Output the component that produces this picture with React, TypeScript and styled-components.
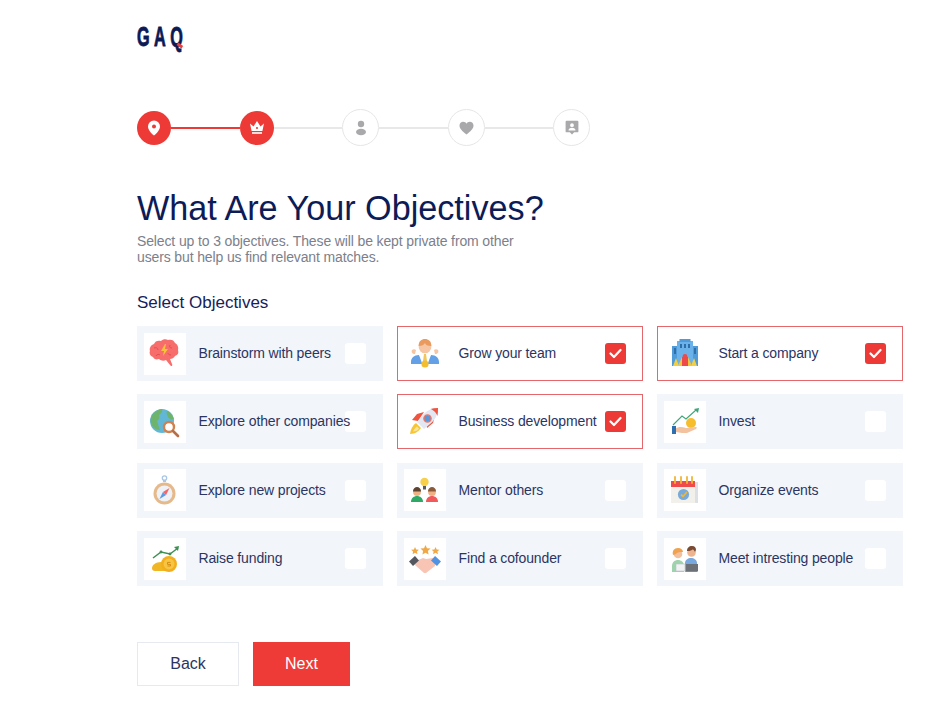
import React from "react";
import styled, { createGlobalStyle } from "styled-components";

const Global = createGlobalStyle`
  html, body { margin: 0; padding: 0; background: #fff; }
  body { font-family: "Liberation Sans", Arial, sans-serif; }
`;

const Page = styled.main`
  width: 935px;
  height: 720px;
  box-sizing: border-box;
  padding: 27px 32px 0 137px;
  overflow: hidden;
`;

const LogoMark = styled.div`
  position: relative;
  width: 48px;
  height: 23px;
`;

const LogoText = styled.span`
  display: block;
  font-size: 27px;
  line-height: 21px;
  font-weight: 700;
  letter-spacing: 7.5px;
  color: #0b1a55;
  white-space: nowrap;
  -webkit-text-stroke: 0.9px #0b1a55;
  transform: scaleX(0.6);
  transform-origin: 0 50%;
`;

const LogoDot = styled.i`
  position: absolute;
  left: 40px;
  top: 17px;
  width: 6px;
  height: 2.5px;
  background: #e8413c;
  transform: rotate(35deg);
`;

const Stepper = styled.div`
  display: flex;
  align-items: center;
  width: 453px;
  height: 37px;
  margin-top: 59px;
`;

const StepCircle = styled.div<{ $active?: boolean }>`
  flex: none;
  display: flex;
  align-items: center;
  justify-content: center;
  box-sizing: border-box;
  width: ${(p) => (p.$active ? 34 : 37)}px;
  height: ${(p) => (p.$active ? 34 : 37)}px;
  border-radius: 50%;
  background: ${(p) => (p.$active ? "#ee3a36" : "#fff")};
  border: ${(p) => (p.$active ? "none" : "1.5px solid #e6e6e6")};
`;

const StepLine = styled.div<{ $active?: boolean }>`
  flex: 1;
  height: 2px;
  background: ${(p) => (p.$active ? "#ee3a36" : "#e8e8e8")};
`;

const Title = styled.h1`
  margin: 41px 0 0;
  font-size: 34.2px;
  line-height: 42px;
  font-weight: 400;
  color: #0d1b57;
  white-space: nowrap;
`;

const Subtitle = styled.p`
  margin: 4px 0 0;
  width: 400px;
  font-size: 14px;
  letter-spacing: -0.13px;
  line-height: 16px;
  color: #7c808b;
`;

const SectionLabel = styled.h2`
  margin: 28px 0 0;
  font-size: 17px;
  line-height: 20px;
  font-weight: 400;
  color: #16225c;
`;

const Grid = styled.div`
  display: grid;
  grid-template-columns: repeat(3, 246px);
  grid-auto-rows: 55px;
  column-gap: 14px;
  row-gap: 13.4px;
  margin-top: 13px;
`;

const Card = styled.div<{ $selected?: boolean }>`
  display: flex;
  align-items: center;
  box-sizing: border-box;
  padding: 0 16px 0 6px;
  background: ${(p) => (p.$selected ? "#fff" : "#f2f5f9")};
  border: 1px solid ${(p) => (p.$selected ? "#e4686b" : "#f2f5f9")};
`;

const IconTile = styled.div`
  flex: none;
  width: 42px;
  height: 42px;
  background: #fff;
  svg { display: block; }
`;

const CardLabel = styled.span`
  position: relative;
  z-index: 1;
  flex: 1;
  min-width: 0;
  margin: 0 0 1px 12.5px;
  font-size: 14px;
  letter-spacing: -0.14px;
  line-height: 18px;
  color: #2b3563;
  white-space: nowrap;
`;

const Check = styled.div<{ $checked?: boolean }>`
  flex: none;
  display: flex;
  align-items: center;
  justify-content: center;
  width: 21px;
  height: 21px;
  border-radius: 3px;
  background: ${(p) => (p.$checked ? "#ee3a36" : "#fff")};
`;

const Actions = styled.div`
  display: flex;
  gap: 14px;
  margin-top: 55.8px;
`;

const BackButton = styled.button`
  box-sizing: border-box;
  width: 102px;
  height: 44px;
  padding: 0;
  background: #fff;
  border: 1px solid #e6e9ef;
  font-family: inherit;
  font-size: 16px;
  color: #2b3563;
`;

const NextButton = styled.button`
  width: 97px;
  height: 44px;
  padding: 0;
  background: #ef3b37;
  border: none;
  font-family: inherit;
  font-size: 16px;
  color: #fff;
`;

const Svg: React.FC<{ children: React.ReactNode }> = ({ children }) => (
  <svg width="42" height="42" viewBox="0 0 42 42" aria-hidden="true">
    {children}
  </svg>
);

const Brain = () => (
  <Svg>
    <path
      d="M10 11c1-3 4-4 7-3 2-2 5-2 7-1 3-1 6 0 7 3 2 1 4 4 3 7 1 3 0 5-3 6-1 2-3 3-5 3l2 5c1 2-1 3-2 1l-4-5c-2 1-5 1-7-1-3 1-5 0-6-2-3-1-4-4-3-6-1-3 1-6 4-7z"
      fill="#f76d6b"
    />
    <path d="M10 15c2-1 4 0 4 2M26 12c-1 2 0 3 2 3M12 23c1-2 3-2 4-1M27 22c-2 0-3-1-3-2" fill="none" stroke="#e0504f" strokeWidth="1" />
    <path d="M21 11l-4 7h3l-1 5 5-7h-3l1-5z" fill="#f8c13c" />
  </Svg>
);

const Globe = () => (
  <Svg>
    <circle cx="18" cy="20" r="12" fill="#63b7d6" />
    <path d="M8 14c3-4 7-6 10-6 1 3-1 5-3 6 1 3 0 5-2 6 1 3 2 6 3 9-5 0-8-3-9-7-1-3 0-6 1-8zM23 10c3 1 6 4 7 8-3 1-5 0-6-2-1-2-2-4-1-6zM22 25c2-1 4 0 4 1-1 2-3 3-5 4 0-2 0-4 1-5z" fill="#6fb46d" />
    <circle cx="25" cy="26" r="5" fill="#fff" stroke="#cf8250" strokeWidth="2.4" />
    <path d="M29 30l5 5" stroke="#b96f45" strokeWidth="2.6" strokeLinecap="round" />
  </Svg>
);

const Compass = () => (
  <Svg>
    <path d="M20.500 13v-2" stroke="#a9c6e6" strokeWidth="3" />
    <circle cx="20.500" cy="9" r="2.200" fill="none" stroke="#a9c6e6" strokeWidth="1.300" />
    <circle cx="20.500" cy="24.500" r="11" fill="#e5b98a" />
    <circle cx="20.500" cy="24.500" r="8" fill="#eef1f6" />
    <path d="M25.500 19l-3.400 7-3.200-3z" fill="#f0686a" />
    <path d="M15.500 30l3.400-7 3.200 3z" fill="#5d9be4" />
  </Svg>
);

const Funding = () => (
  <Svg>
    <path d="M9 20l8-6 9 2 8-6" fill="none" stroke="#3e8f52" strokeWidth="1.5" />
    <path d="M30 9l5-1-1 5z" fill="#3e8f52" />
    <circle cx="17" cy="14" r="1.4" fill="#3e8f52" />
    <circle cx="26" cy="16" r="1.4" fill="#3e8f52" />
    <path d="M8 30c0-3 4-6 9-6h6v9H11c-2 0-3-1-3-3z" fill="#f0b624" />
    <circle cx="25" cy="26" r="8" fill="#f3ae1d" />
    <circle cx="25" cy="26" r="5.400" fill="#f7c544" />
    <path d="M23.500 28h3v-1.600h-3v-2h3" fill="none" stroke="#d58d12" strokeWidth="1" />
  </Svg>
);

const Team = () => (
  <Svg>
    <path d="M7 29c0-4 3-7 8-7l6 4 6-4c5 0 8 3 8 7v2H7z" fill="#64a0e6" />
    <path d="M11 21c-3 0-4-2-3-4 1-1 3-1 4 0zM31 21c3 0 4-2 3-4-1-1-3-1-4 0z" fill="#f6c6a4" />
    <circle cx="21" cy="14" r="6.3" fill="#f6c6a4" />
    <path d="M14.6 13c0-5 3-7 6.4-7s6.4 2 6.4 7c-4 0-6-1-6.4-3-1 2-3 3-6.4 3z" fill="#ea9a5e" />
    <path d="M15 22h12l-3 8h-6z" fill="#fff" />
    <path d="M20 21h2l1 7h-4z" fill="#f0c75a" />
    <circle cx="21" cy="31" r="3.6" fill="#f2be2f" />
  </Svg>
);

const Rocket = () => (
  <Svg>
    <path d="M6 33c.5-5 3-9 6-11l5 5c-2 3-6 6-11 6z" fill="#f7c531" />
    <path d="M9 30.500c1-2 2-4 4-5l2 2c-1 2-3 3-6 3z" fill="#fbe39a" />
    <path d="M13 13l7-2-6 9-6-1zM29 22l2-7-9 6 1 6 z" fill="#f0543f" />
    <path d="M34 7c-7 0-12 3-16 8l-5 6 7 7 6-5c5-4 8-9 8-16z" fill="#e3e7f1" />
    <path d="M26.500 8c2.500 .5 6 4 7 7 .4-2.500.5-5.300.5-8-2.800 0-5.300.3-7.500 1z" fill="#f0543f" />
    <circle cx="23.500" cy="17.500" r="3.600" fill="#5c97d8" stroke="#e8776a" strokeWidth="1.400" />
  </Svg>
);

const Mentor = () => (
  <Svg>
    <circle cx="20.500" cy="13" r="4.200" fill="#f7cf4a" />
    <rect x="19" y="17" width="3" height="3.500" fill="#5b5b5b" />
    <path d="M7 33c0-4 3-6 6-6s6 2 6 6z" fill="#2fa866" />
    <circle cx="13" cy="23" r="3.900" fill="#eeb284" />
    <path d="M9 22.500c0-3 2-4.500 4-4.500s4 1.500 4 4.500c-3 0-6 0-8 0z" fill="#5e4331" />
    <path d="M22 33c0-4 3-6 6-6s6 2 6 6z" fill="#f05a5a" />
    <circle cx="28" cy="23" r="3.900" fill="#eeb284" />
    <path d="M24 22.500c0-3 2-4.500 4-4.500s4 1.500 4 4.500c-3 0-6 0-8 0z" fill="#8a5a3a" />
  </Svg>
);

const Handshake = () => (
  <Svg>
    <path d="M11 9l1.200 2.500 2.700.3-2 1.800.6 2.600-2.500-1.400-2.400 1.400.5-2.600-2-1.800 2.800-.3zM21.500 7l1.500 3.200 3.500.4-2.600 2.400.7 3.400-3.100-1.700-3.100 1.700.7-3.400-2.600-2.400 3.500-.4zM31.500 9l1.200 2.500 2.700.3-2 1.800.6 2.600-2.500-1.400-2.400 1.400.5-2.600-2-1.800 2.800-.3z" fill="#f0a846" />
    <path d="M12 23l7-3 3 1 7-1 3 4-1 4-9 7h-2l-9-8z" fill="#f8c5b4" />
    <rect x="6" y="20" width="8" height="6" transform="rotate(-42 10 23)" fill="#55575f" />
    <rect x="28" y="20" width="8" height="6" transform="rotate(42 32 23)" fill="#4f93e2" />
  </Svg>
);

const Company = () => (
  <Svg>
    <rect x="8" y="13" width="26" height="20" fill="#4f9ad8" />
    <rect x="13" y="8" width="16" height="25" fill="#6bb1ea" />
    <rect x="15.500" y="6" width="11" height="3" fill="#4f9ad8" />
    <path d="M10 15h2v6h-2zM30 15h2v6h-2zM16 11h2v4h-2zM20 11h2v4h-2zM24 11h2v4h-2z" fill="#2f6fa8" />
    <path d="M9 33l3-8 3 8zM27 33l3-8 3 8z" fill="#f4cf3f" />
    <path d="M14 33l4-9 2 9zM22 33l2-9 4 9z" fill="#f6c63a" />
    <rect x="18" y="24" width="6" height="9" fill="#ee4a48" />
    <circle cx="21" cy="23.500" r="2.400" fill="#ee4a48" />
  </Svg>
);

const Invest = () => (
  <Svg>
    <path d="M9 24l9-9 4 3 10-9" fill="none" stroke="#3fa67a" strokeWidth="1.100" />
    <path d="M30 8l5-1-1 5z" fill="#3fa67a" />
    <circle cx="27" cy="22" r="5" fill="#f6bd2c" />
    <path d="M11 28c4-3 7-2 11-1l10-1c1 0 1 1 0 2l-9 4h-5l-6-1z" fill="#f3c3a0" />
    <rect x="8" y="25" width="4" height="8" fill="#2f6fb0" />
  </Svg>
);

const Events = () => (
  <Svg>
    <path d="M11 13h23v21l-19-1z" fill="#dcdfe4" />
    <rect x="7" y="13" width="24" height="21" fill="#f2f0ea" />
    <rect x="7" y="12" width="24" height="6" fill="#ef4b4b" />
    <path d="M11 8v6M17 8v6M23 8v6M28 8v6" stroke="#f0b534" strokeWidth="1.800" strokeLinecap="round" />
    <circle cx="19.500" cy="25.500" r="5.600" fill="#79a9d8" />
    <path d="M17 25.500l2 2 4-4.500" fill="none" stroke="#f0b534" strokeWidth="1.800" />
  </Svg>
);

const People = () => (
  <Svg>
    <path d="M8 34v-6c0-4 3-6 6-6s6 2 6 6v6z" fill="#9fd3ae" />
    <circle cx="14" cy="16" r="4.300" fill="#f3c09f" />
    <path d="M9 17c-1-4 1-7 5-7 3 0 5 2 5 4-3 0-5 0-6 1-1 1-3 2-4 2z" fill="#f0a24e" />
    <rect x="12" y="26" width="9" height="7" fill="#f2f2f2" stroke="#b9c1c8" strokeWidth=".6" />
    <path d="M21 34V25c0-3 3-5 6-5s6 2 6 5v9z" fill="#77a9e0" />
    <circle cx="27.500" cy="14.500" r="4.300" fill="#eeb48f" />
    <path d="M23 13c0-3 2-5 5-5s4 2 4 4l-1 2c-1-2-2-3-3-2-2 1-3 1-5 1z" fill="#7a4a33" />
    <rect x="22" y="26" width="12" height="7.500" fill="#6c7178" />
  </Svg>
);

const CheckMark = () => (
  <svg width="13" height="11" viewBox="0 0 13 11" aria-hidden="true">
    <path d="M1.500 5.500l3.500 3.500 6.500-7" fill="none" stroke="#fff" strokeWidth="2.200" strokeLinecap="round" strokeLinejoin="round" />
  </svg>
);

const PinIcon = () => (
  <svg width="14" height="16" viewBox="0 0 14 16" aria-hidden="true">
    <path fillRule="evenodd" d="M7 .5a6 6 0 0 1 6 6c0 3.500-3.400 6.900-6 9-2.600-2.100-6-5.500-6-9a6 6 0 0 1 6-6zm0 4a2 2 0 1 0 0 4 2 2 0 0 0 0-4z" fill="#fff" />
  </svg>
);

const CrownIcon = () => (
  <svg width="16" height="15" viewBox="0 0 16 15" aria-hidden="true">
    <path d="M1 3.500l3.500 3L8 1l3.500 5.500 3.500-3-1.600 7.500H2.600z" fill="#fff" />
    <rect x="3" y="12.200" width="10" height="1.600" fill="#fff" />
    <circle cx="8" cy="8" r="1.100" fill="#ee3a36" />
  </svg>
);

const PersonIcon = () => (
  <svg width="14" height="16" viewBox="0 0 14 16" aria-hidden="true">
    <circle cx="7" cy="4" r="3.200" fill="#a9a9ac" />
    <ellipse cx="7" cy="12" rx="5" ry="3.300" fill="#a9a9ac" />
  </svg>
);

const HeartIcon = () => (
  <svg width="15" height="14" viewBox="0 0 15 14" aria-hidden="true">
    <path d="M7.500 13.500C3 10 .5 7.600.5 4.500.5 2.300 2.200.8 4.200.8c1.400 0 2.600.7 3.300 1.900C8.200 1.500 9.400.8 10.800.8c2 0 3.700 1.500 3.700 3.700 0 3.100-2.500 5.500-7 9z" fill="#a9a9ac" />
  </svg>
);

const BadgeIcon = () => (
  <svg width="14" height="15" viewBox="0 0 14 15" aria-hidden="true">
    <path fillRule="evenodd" d="M1.500 .8h11c.5 0 .9.400.9.900v9.700c0 .5-.4.900-.9.900H9.200L7 14.500l-2.200-2.200H1.500c-.5 0-.9-.4-.9-.9V1.700c0-.5.4-.9.900-.9zM7 3.300a1.900 1.900 0 1 0 0 3.800 1.900 1.900 0 0 0 0-3.800zM3.500 10.400h7c0-1.800-1.500-2.700-3.500-2.700s-3.500.9-3.500 2.700z" fill="#a9a9ac" />
  </svg>
);

type Objective = { label: string; icon: React.FC; selected?: boolean };

const objectives: Objective[] = [
  { label: "Brainstorm with peers", icon: Brain },
  { label: "Grow your team", icon: Team, selected: true },
  { label: "Start a company", icon: Company, selected: true },
  { label: "Explore other companies", icon: Globe },
  { label: "Business development", icon: Rocket, selected: true },
  { label: "Invest", icon: Invest },
  { label: "Explore new projects", icon: Compass },
  { label: "Mentor others", icon: Mentor },
  { label: "Organize events", icon: Events },
  { label: "Raise funding", icon: Funding },
  { label: "Find a cofounder", icon: Handshake },
  { label: "Meet intresting people", icon: People },
];

export default function App() {
  return (
    <Page>
      <Global />
      <LogoMark>
        <LogoText>GAQ</LogoText>
        <LogoDot />
      </LogoMark>
      <Stepper>
        <StepCircle $active><PinIcon /></StepCircle>
        <StepLine $active />
        <StepCircle $active><CrownIcon /></StepCircle>
        <StepLine />
        <StepCircle><PersonIcon /></StepCircle>
        <StepLine />
        <StepCircle><HeartIcon /></StepCircle>
        <StepLine />
        <StepCircle><BadgeIcon /></StepCircle>
      </Stepper>
      <Title>What Are Your Objectives?</Title>
      <Subtitle>
        Select up to 3 objectives. These will be kept private from other users but help us find relevant matches.
      </Subtitle>
      <SectionLabel>Select Objectives</SectionLabel>
      <Grid>
        {objectives.map(({ label, icon: Icon, selected }) => (
          <Card key={label} $selected={selected}>
            <IconTile><Icon /></IconTile>
            <CardLabel>{label}</CardLabel>
            <Check $checked={selected}>{selected && <CheckMark />}</Check>
          </Card>
        ))}
      </Grid>
      <Actions>
        <BackButton>Back</BackButton>
        <NextButton>Next</NextButton>
      </Actions>
    </Page>
  );
}
